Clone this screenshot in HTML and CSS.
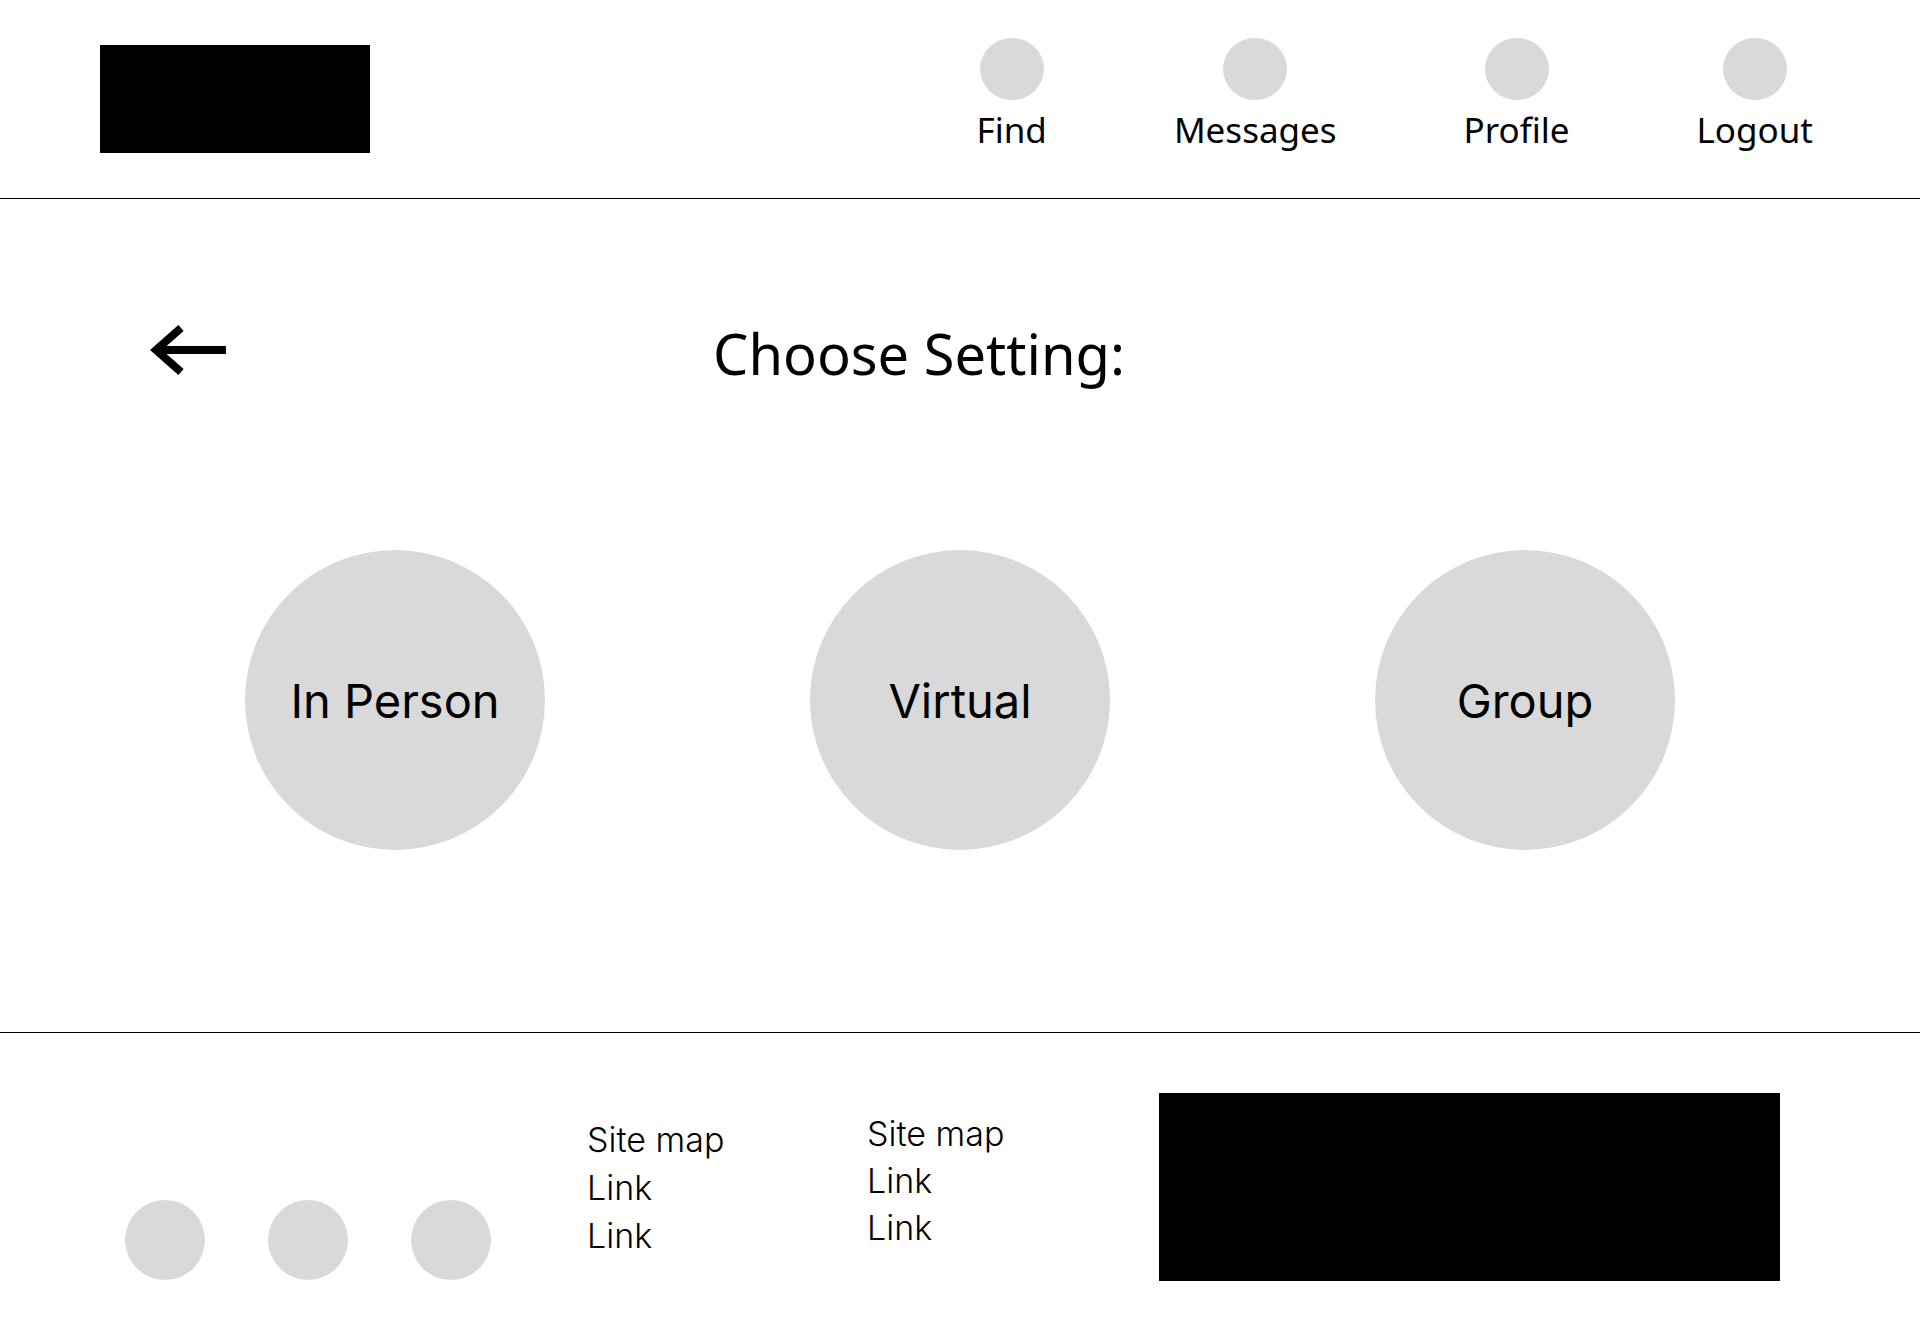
FILE: index.html
```html
<!DOCTYPE html>
<html lang="en">
<head>
<meta charset="utf-8">
<title>Choose Setting</title>
<link rel="stylesheet" href="styles.css">
</head>
<body>
<header class="header">
  <div class="logo"></div>
  <nav class="nav">
    <a class="nav-item" href="#"><span class="nav-dot"></span><span class="nav-label">Find</span></a>
    <a class="nav-item" href="#"><span class="nav-dot"></span><span class="nav-label">Messages</span></a>
    <a class="nav-item" href="#"><span class="nav-dot"></span><span class="nav-label">Profile</span></a>
    <a class="nav-item" href="#"><span class="nav-dot"></span><span class="nav-label">Logout</span></a>
  </nav>
</header>
<main class="main">
  <div class="title-row">
    <a class="back" href="#" aria-label="Back">
      <svg width="76" height="50" viewBox="0 0 76 50" aria-hidden="true">
        <path d="M6 25 H76" stroke="#000" stroke-width="8" fill="none"/>
        <path d="M31 3 L6 25 L31 47" stroke="#000" stroke-width="8" fill="none" stroke-linejoin="miter" stroke-miterlimit="10"/>
      </svg>
    </a>
    <h1 class="title">Choose Setting:</h1>
  </div>
  <div class="options">
    <button class="option">In Person</button>
    <button class="option">Virtual</button>
    <button class="option">Group</button>
  </div>
</main>
<footer class="footer">
  <div class="social">
    <span class="social-dot"></span>
    <span class="social-dot"></span>
    <span class="social-dot"></span>
  </div>
  <ul class="links links-a">
    <li>Site map</li>
    <li>Link</li>
    <li>Link</li>
  </ul>
  <ul class="links links-b">
    <li>Site map</li>
    <li>Link</li>
    <li>Link</li>
  </ul>
  <div class="footer-block"></div>
</footer>
</body>
</html>
```

FILE: styles.css
```css
* { box-sizing: border-box; }
html, body { margin: 0; padding: 0; background: #fff; }
body {
  width: 1920px;
  height: 1320px;
  overflow: hidden;
  color: #000;
  font-family: "Noto Sans", "Open Sans", sans-serif;
}

.header {
  height: 199px;
  border-bottom: 1px solid #000;
  display: flex;
  align-items: flex-start;
  justify-content: space-between;
}
.logo {
  width: 270px;
  height: 108px;
  background: #000;
  margin: 45px 0 0 100px;
}
.nav {
  display: flex;
  gap: 127px;
  padding: 38px 107px 0 0;
}
.nav-item {
  display: flex;
  flex-direction: column;
  align-items: center;
  color: #000;
  text-decoration: none;
}
.nav-dot {
  width: 64px;
  height: 62px;
  border-radius: 50%;
  background: #d9d9d9;
}
.nav-label {
  margin-top: 9px;
  font-size: 35px;
  line-height: 42px;
}

.main {
  height: 834px;
  border-bottom: 1px solid #000;
  padding-top: 121px;
}
.title-row {
  display: flex;
  align-items: flex-start;
  padding-left: 150px;
}
.back {
  display: block;
  margin-top: 5px;
  width: 76px;
  height: 50px;
}
.back svg { display: block; }
.title {
  margin: 0 0 0 487px;
  font-size: 56px;
  font-weight: 400;
  line-height: 67px;
}
.options {
  display: flex;
  gap: 265px;
  padding-left: 245px;
  margin-top: 163px;
}
.option {
  width: 300px;
  height: 300px;
  border-radius: 50%;
  border: 0;
  background: #d9d9d9;
  color: #000;
  font-family: Inter, "Noto Sans", sans-serif;
  font-size: 47px;
  font-weight: 400;
  display: flex;
  align-items: center;
  justify-content: center;
  padding: 0;
}

.footer {
  height: 287px;
  display: flex;
  align-items: flex-start;
  padding-left: 125px;
}
.social {
  display: flex;
  gap: 63px;
  margin-top: 167px;
}
.social-dot {
  width: 80px;
  height: 80px;
  border-radius: 50%;
  background: #d9d9d9;
}
.links {
  list-style: none;
  margin: 0;
  padding: 0;
  font-family: Inter, "Noto Sans", sans-serif;
  font-weight: 300;
  font-size: 34px;
  line-height: 48px;
}
.links-a {
  width: 280px;
  margin: 83px 0 0 96px;
}
.links-b {
  width: 292px;
  margin-top: 77px;
  line-height: 47px;
}
.footer-block {
  width: 621px;
  height: 188px;
  margin-top: 60px;
  background: #000;
}
```
